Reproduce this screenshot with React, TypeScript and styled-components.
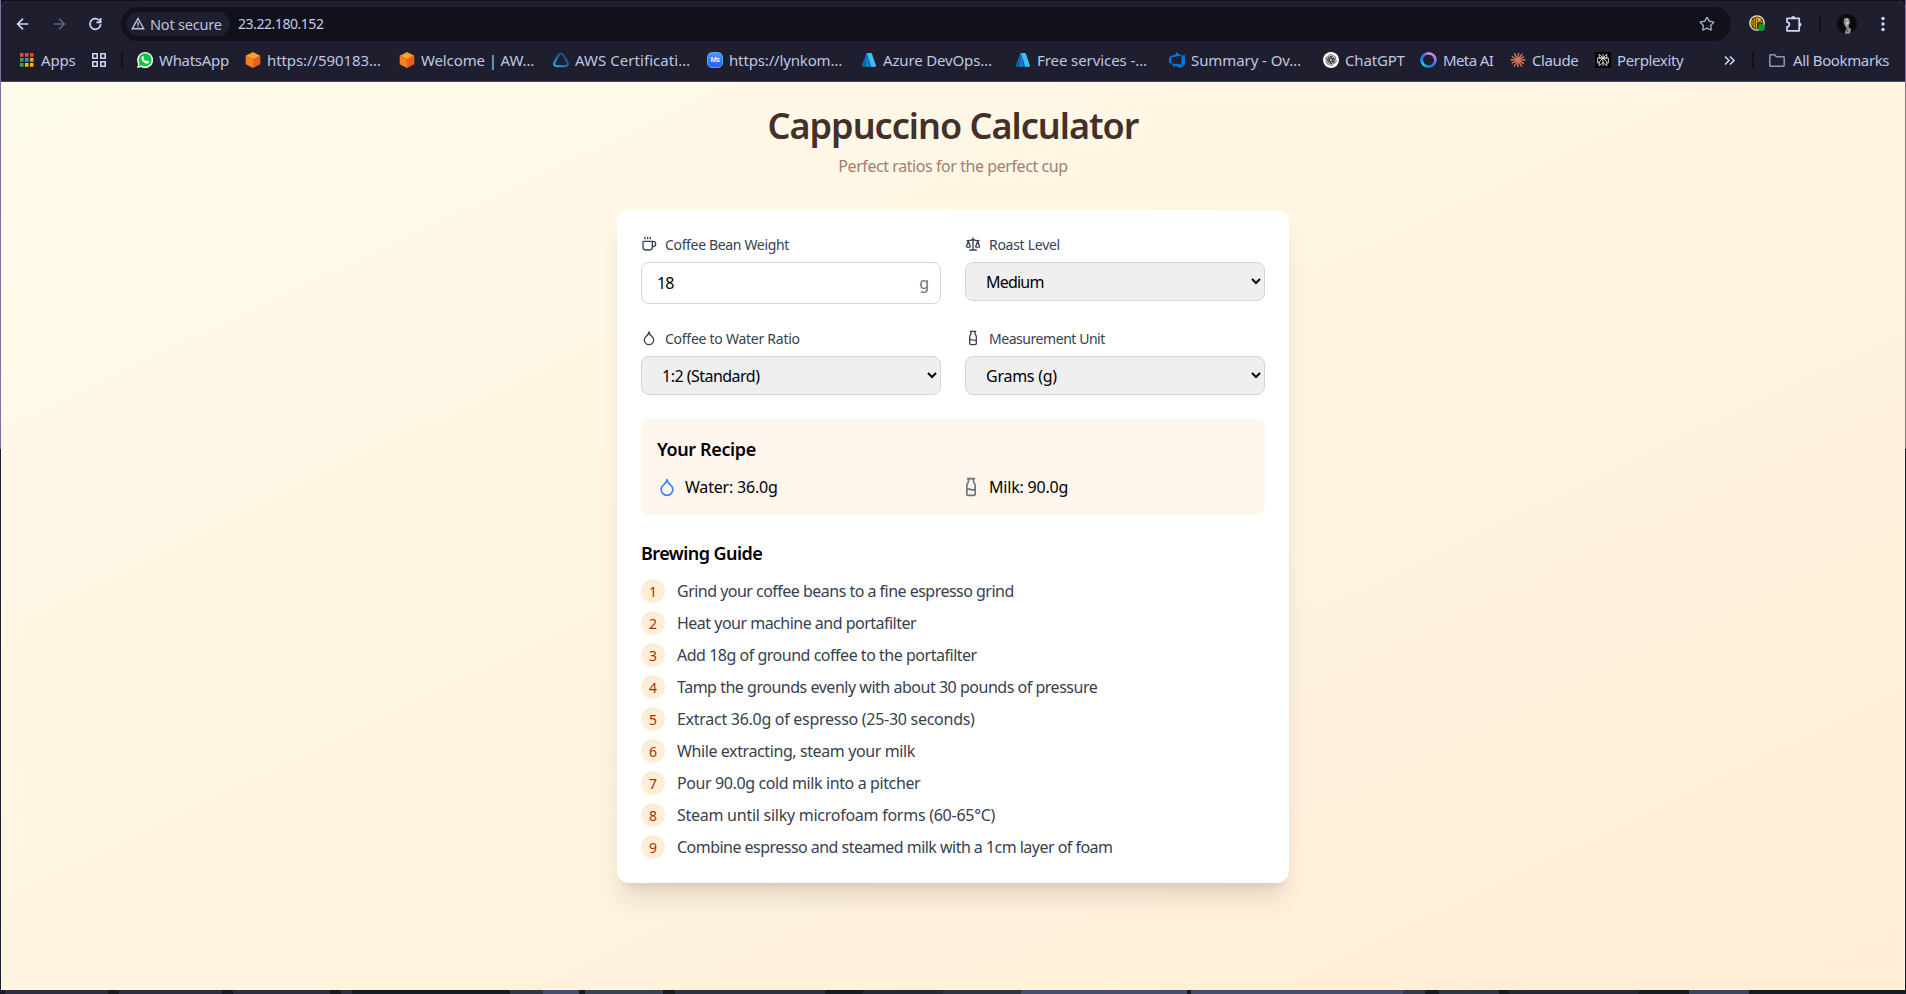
import React from "react";
import styled, { createGlobalStyle } from "styled-components";
import { Droplet, Milk, Star } from "lucide-react";

const GlobalStyle = createGlobalStyle`
  *, *::before, *::after { box-sizing: border-box; }
  html, body { margin: 0; height: 100%; background: #141b24; overflow: hidden; }
  body, input, select { font-family: "Noto Sans", "Open Sans", sans-serif; }
  h1, h2, p, ol { margin: 0; padding: 0; }
  svg { display: block; flex: none; }
`;

const Window = styled.div`
  width: 1906px;
  height: 994px;
  display: flex;
  flex-direction: column;
  border: solid transparent;
  border-width: 1px 1px 0;
  background:
    linear-gradient(#826f9f 0 449px, #1a2136 449px 990px, #141b24 990px) border-box;
`;

const Chrome = styled.header`
  height: 81px;
  flex: none;
  background: linear-gradient(#1e1e2e, #1e1e2e);
  border-bottom: 1px solid #45475a;
  border-radius: 7px 7px 0 0;
  box-shadow: 0 -8px 0 #11111b;
  color: #cdd6f4;
`;

const Toolbar = styled.div`
  display: flex;
  align-items: center;
  height: 45px;
  padding: 0 12px;
`;

const NavButton = styled.span<{ $dim?: boolean }>`
  width: 20px;
  margin-right: 16px;
  display: flex;
  justify-content: center;
  color: ${(p) => (p.$dim ? "#5d6075" : "#cdd6f4")};
`;

const AddressBar = styled.div`
  display: flex;
  align-items: center;
  width: 1610px;
  height: 34px;
  border-radius: 17px;
  background: #11111b;
  padding: 0 16px 0 5px;
`;

const Chip = styled.div`
  display: flex;
  align-items: center;
  gap: 5px;
  width: 104px;
  height: 24px;
  border-radius: 12px;
  padding-left: 5px;
  background: #1e1e2e;
  white-space: nowrap;
  font-size: 14.5px;
  letter-spacing: -0.2px;
  color: #bac2de;
`;

const Url = styled.span`
  margin-left: 8px;
  flex: 1;
  font-size: 14px;
  letter-spacing: -0.45px;
  color: #c3cbe8;
`;

const Tools = styled.div`
  flex: 1;
  display: flex;
  align-items: center;
  gap: 16px;
  padding-left: 18px;
  svg:first-child { margin-right: 3px; }
`;

const Separator = styled.span`
  width: 2px;
  height: 16px;
  background: #11111b;
  flex: none;
`;

const Bookmarks = styled.nav`
  display: flex;
  align-items: center;
  height: 28px;
  padding-left: 19px;
  font-size: 15px;
`;

const Bookmark = styled.span<{ $w: number; $ls?: number; $gap?: number }>`
  display: flex;
  align-items: center;
  gap: ${(p) => p.$gap ?? 6}px;
  width: ${(p) => p.$w}px;
  letter-spacing: ${(p) => p.$ls ?? 0}px;
  flex: none;
  white-space: nowrap;
  color: #bfc7e4;
`;

const Page = styled.main`
  height: 908px;
  flex: none;
  padding-top: 24px;
  display: flex;
  flex-direction: column;
  align-items: center;
  background: linear-gradient(to bottom right, #fffbeb, #ffedd5);
`;

const Title = styled.h1`
  font-size: 36px;
  line-height: 40px;
  font-weight: 600;
  letter-spacing: -1px;
  color: #43302b;
  margin-bottom: 8px;
`;

const Subtitle = styled.p`
  font-size: 16px;
  line-height: 24px;
  letter-spacing: -0.43px;
  color: #a18072;
  margin-bottom: 32px;
`;

const Card = styled.section`
  width: 672px;
  padding: 24px;
  border-radius: 12px;
  background: #fff;
  display: flex;
  flex-direction: column;
  gap: 24px;
  box-shadow: 0 20px 25px -5px rgba(0, 0, 0, 0.1), 0 8px 10px -6px rgba(0, 0, 0, 0.1);
`;

const Fields = styled.div`
  display: grid;
  grid-template-columns: 1fr 1fr;
  gap: 24px;
  align-items: start;
`;

const Field = styled.div`
  display: flex;
  flex-direction: column;
  gap: 8px;
`;

const Label = styled.label<{ $ls?: number }>`
  display: flex;
  align-items: center;
  gap: 8px;
  height: 20px;
  font-size: 14px;
  letter-spacing: ${(p) => p.$ls ?? 0}px;
  color: #374151;
`;

const WeightBox = styled.div`
  display: flex;
  align-items: center;
  height: 42px;
  border: 1px solid #d1d5db;
  border-radius: 8px;
  padding: 0 11px 0 15px;
  font-size: 16px;
  color: #6b7280;
`;

const WeightInput = styled.input`
  flex: 1;
  min-width: 0;
  border: 0;
  outline: 0;
  padding: 0;
  background: none;
  font-size: 16px;
  letter-spacing: -1px;
  color: #000;
`;

const Select = styled.select<{ $ls?: number }>`
  height: 39px;
  width: 100%;
  border: 1px solid #d1d5db;
  border-radius: 8px;
  padding: 0 0 0 16px;
  background: #efefef;
  font-size: 16px;
  letter-spacing: ${(p) => p.$ls ?? 0}px;
  color: #000;
`;

const Recipe = styled.div`
  padding: 16px;
  border-radius: 8px;
  background: #fff7ed;
`;

const Heading = styled.h2<{ $ls: number }>`
  font-size: 18px;
  line-height: 28px;
  font-weight: 600;
  letter-spacing: ${(p) => p.$ls}px;
  margin-bottom: 12px;
  color: #000;
`;

const Amounts = styled.div`
  display: grid;
  grid-template-columns: 1fr 1fr;
  gap: 16px;
`;

const Amount = styled.div<{ $tint: string }>`
  display: flex;
  align-items: center;
  gap: 8px;
  height: 24px;
  font-size: 16px;
  letter-spacing: -0.2px;
  color: #000;
  svg { color: ${(p) => p.$tint}; }
`;

const Steps = styled.ol`
  list-style: none;
  display: flex;
  flex-direction: column;
  gap: 8px;
`;

const Step = styled.li<{ $ls: number }>`
  display: flex;
  align-items: center;
  gap: 12px;
  height: 24px;
  font-size: 16px;
  letter-spacing: ${(p) => p.$ls}px;
  white-space: nowrap;
  color: #374151;
`;

const Badge = styled.span`
  width: 24px;
  height: 24px;
  border-radius: 50%;
  background: #ffedd5;
  color: #9a3412;
  font-size: 14px;
  letter-spacing: 0;
  display: flex;
  align-items: center;
  justify-content: center;
`;

const Desktop = styled.footer`
  height: 4px;
  display: flex;
  padding-left: 4px;
  background: #141b24;
`;

const Tile = styled.span<{ $w: number; $color: string; $gap: number }>`
  width: ${(p) => p.$w}px;
  margin-right: ${(p) => p.$gap}px;
  flex: none;
  background: ${(p) => p.$color};
`;

const Stroke = ({ size = 16, width = 2, children }: { size?: number; width?: number; children: React.ReactNode }) => (
  <svg width={size} height={size} viewBox="0 0 24 24" fill="none" stroke="currentColor" strokeWidth={width} strokeLinecap="round" strokeLinejoin="round">
    {children}
  </svg>
);

const CoffeeIcon = () => (
  <Stroke><path d="M10 2v2M14 2v2M6 2v2M16 8a1 1 0 0 1 1 1v8a4 4 0 0 1-4 4H7a4 4 0 0 1-4-4V9a1 1 0 0 1 1-1h14a4 4 0 1 1 0 8h-1" /></Stroke>
);

const ScaleIcon = () => (
  <Stroke><path d="m16 16 3-8 3 8c-.87.65-1.92 1-3 1s-2.13-.35-3-1ZM2 16l3-8 3 8c-.87.65-1.92 1-3 1s-2.13-.35-3-1ZM7 21h10M12 3v18M3 7h2c2 0 5-1 7-2 2 1 5 2 7 2h2" /></Stroke>
);

const AppsIcon = () => (
  <svg width="14" height="14" viewBox="0 0 14 14">
    {["#f04438", "#f04438", "#f04438", "#34a853", "#2f8df5", "#fbab00", "#34a853", "#fbbc04", "#fbbc04"].map((c, i) => (
      <rect key={i} x={(i % 3) * 5} y={Math.floor(i / 3) * 5} width="3.5" height="3.7" fill={c} />
    ))}
  </svg>
);

const GroupsIcon = () => (
  <svg width="14" height="14" fill="none" stroke="#cdd6f4" strokeWidth="1.6">
    <path d="M.8.8h4.4v4.4H.8zM8.8.8h4.4v4.4H8.800zM.8 8.800h4.400v4.400H.8zM8.800 8.800h4.400v4.400H8.800z" />
  </svg>
);

const WhatsAppIcon = () => (
  <svg width="16" height="16" viewBox="0 0 16 16">
    <path d="M0 16l1.2-4A8 8 0 1 1 4.2 15z" fill="#fff" />
    <circle cx="8.1" cy="7.9" r="6.6" fill="#12c346" />
    <path d="M1.7 14.3l1-3.3 2.2 2.4z" fill="#12c346" />
    <path d="M5.4 4.2c.7-.5 1.1 0 1.6 1.5.1.4-.6.8-.5 1.1.6 1.2 1.5 2 2.7 2.5.4.1.7-.8 1.1-.7 1.600.7 1.900.9 1.600 1.700-.5 1.300-2 1.500-3.600.9C6 10.300 4.600 8.200 4.500 6.300c0-.9.4-1.700.9-2.100z" fill="#fff" />
  </svg>
);

const CubeIcon = () => (
  <svg width="16" height="16" viewBox="0 0 16 16">
    <path d="M8 0l7.300 3.700L8 7.500.7 3.700z" fill="#ff9d2e" />
    <path d="M.7 3.700L8 7.500V16L.7 12.300z" fill="#f58020" />
    <path d="M15.300 3.700L8 7.500V16l7.300-3.700z" fill="#e9621b" />
  </svg>
);

const CertIcon = () => (
  <svg width="16" height="16" viewBox="0 0 16 16" fill="none">
    <defs>
      <linearGradient id="cert" x1="0" y1="1" x2="1" y2="0">
        <stop offset="0" stopColor="#14b5e2" /><stop offset=".45" stopColor="#126fa5" /><stop offset="1" stopColor="#1d3566" />
      </linearGradient>
    </defs>
    <path d="M8 1.500c1.200 0 2 .8 2.700 2l3.500 6.300c1.300 2.700.3 4.300-2.200 4.300H4c-2.500 0-3.500-1.600-2.200-4.300l3.500-6.300C6 2.300 6.800 1.500 8 1.500z" stroke="url(#cert)" strokeWidth="2.400" />
  </svg>
);

const BlueTag = styled.span`
  width: 16px;
  height: 16px;
  border-radius: 5px;
  background: linear-gradient(#3f9bf7, #2b5dfb);
  border: 1px solid #5ea7f8;
  color: #fff;
  font-size: 7px;
  line-height: 13px;
  font-weight: 600;
  text-align: center;
  letter-spacing: -0.5px;
`;

const AzureIcon = () => (
  <svg width="16" height="16" viewBox="0 0 16 16">
    <path d="M5.300 1h4.200L5 14.800H1.600c-.7 0-1-.5-.8-1.200z" fill="#1263b4" />
    <path d="M5 10.500h6.500l2 4.200H9.300z" fill="#0a6fc9" />
    <path d="M6 1h4c.5 0 .8.2 1 .7l4 12c.2.7-.1 1.100-.8 1.100h-3.900L6.400 3z" fill="#39bff0" />
    <path d="M6.300 4.500l2 6H6l3.200 4.300H5z" fill="#168bd8" />
  </svg>
);

const DevOpsIcon = () => (
  <svg width="16" height="16" viewBox="0 0 16 16">
    <path d="M16 3v9.800l-4 3.200-6.200-2.200V16l-3.500-4.600 10.200.8V3.500zM12.600 3.600L6.900 0v2.300L1.600 3.900 0 6v4.700l2.300 1V5.600z" fill="#0078d7" />
  </svg>
);

const ChatIcon = () => (
  <svg width="16" height="16" viewBox="0 0 16 16" fill="none">
    <circle cx="8" cy="8" r="8" fill="#fff" />
    <g stroke="#222" strokeWidth=".75">
      {[0, 60, 120, 180, 240, 300].map((a) => (
        <path key={a} transform={`rotate(${a} 8 8)`} d="M5.300 7.200V4.800a2.200 2.200 0 0 1 3.800-1.400M6.700 9V6.500l2.600-1.500 2.200 1.300" />
      ))}
    </g>
  </svg>
);

const MetaRing = styled.span`
  width: 17px;
  height: 16px;
  border-radius: 50%;
  background: conic-gradient(#e68cf0, #8f7cf5 80deg, #2476f5 130deg, #1b7cf5 180deg, #19d3d3 230deg, #1c6cf5 290deg, #7166f3 330deg, #e68cf0);
  mask: radial-gradient(circle, transparent 5px, #000 5.700px);
`;

const ClaudeIcon = () => (
  <svg width="16" height="16" viewBox="0 0 16 16" stroke="#d97757" strokeWidth="1.400" strokeLinecap="round">
    {[5, 35, 62, 90, 122, 150, 182, 212, 243, 272, 300, 332].map((a, i) => (
      <path key={a} transform={`rotate(${a} 8 8)`} d={i % 2 ? "M8 8V.9" : "M8 8V1.500"} />
    ))}
  </svg>
);

const PerplexityIcon = () => (
  <svg width="16" height="16" viewBox="0 0 16 16" fill="none" stroke="#e5e5e0" strokeWidth=".9">
    <rect width="16" height="16" fill="#000" stroke="none" />
    <path d="M8 2v12M4.200 2.200L8 6l3.800-3.800V6H4.200zM2.600 6h10.800v5h-1.600M2.600 6v5h1.600M8 6l-3.800 3.800v4L8 10.500l3.800 3.300v-4z" />
  </svg>
);

const ExtensionIcon = () => (
  <svg width="17" height="17" viewBox="0 0 17 17">
    <circle cx="8" cy="8" r="7.200" fill="#3b2c08" stroke="#f2eee0" strokeWidth="1.300" />
    <path d="M3 5v6M5.200 3v10M7.400 2v12" stroke="#d8a31a" strokeWidth="1.300" />
    <path d="M8.500 2.200a6 6 0 0 1 5 5.300h-5z" fill="#e3b21d" />
    <path d="M9 8l4-3M9 9h5" stroke="#3b2c08" />
    <circle cx="12.500" cy="12.500" r="3.400" fill="#0e9a2d" />
  </svg>
);

const PuzzleIcon = () => (
  <svg width="18" height="18" viewBox="0 0 18 18" fill="none" stroke="#cdd6f4" strokeWidth="1.700" strokeLinejoin="round">
    <path d="M2 3.300h12.200v12.500H2v-4c3.200-.2 3.200-4.500 0-4.700z" />
    <path d="M6.300 3.200a1.900 1.900 0 0 1 3.800 0zM14.300 7.700a1.900 1.900 0 0 1 0 3.800z" fill="#cdd6f4" strokeWidth=".6" />
  </svg>
);

const AvatarIcon = () => (
  <svg width="20" height="20" viewBox="0 0 20 20">
    <circle cx="10" cy="10" r="10" fill="#0b0b0c" />
    <path d="M7.500 4.500c2-1.800 5-.6 5.300 2 .3 2-.3 4-1.300 5l.4 2 2.300 1.500-1 4.300c-2 .7-4 .7-5.500 0l1.600-5.300-1.900-3c-1-2-1-5 .1-6.500z" fill="#8e8e90" />
    <path d="M8.500 6l2.500-1 1 3.500-1.500 3-1.600-1.200z" fill="#c9c9ca" />
    <path d="M8 7.300h1.500M10.500 7h1.300M9.500 14l1 4" stroke="#333" strokeWidth=".8" />
  </svg>
);

const bookmarks: { icon: React.ReactNode; text: string; w: number; ls: number }[] = [
  { icon: <WhatsAppIcon />, text: "WhatsApp", w: 108, ls: -0.3 },
  { icon: <CubeIcon />, text: "https://590183…", w: 154, ls: -0.08 },
  { icon: <CubeIcon />, text: "Welcome | AW…", w: 154, ls: -0.12 },
  { icon: <CertIcon />, text: "AWS Certificati…", w: 154, ls: 0.05 },
  { icon: <BlueTag>Ms</BlueTag>, text: "https://lynkom…", w: 154, ls: -0.15 },
  { icon: <AzureIcon />, text: "Azure DevOps…", w: 154, ls: -0.15 },
  { icon: <AzureIcon />, text: "Free services -…", w: 154, ls: -0.08 },
  { icon: <DevOpsIcon />, text: "Summary - Ov…", w: 154, ls: -0.08 },
  { icon: <ChatIcon />, text: "ChatGPT", w: 97, ls: -0.17 },
  { icon: <MetaRing />, text: "Meta AI", w: 90, ls: -0.6 },
  { icon: <ClaudeIcon />, text: "Claude", w: 85, ls: -0.4 },
  { icon: <PerplexityIcon />, text: "Perplexity", w: 129, ls: -0.36 },
];

const steps: [string, number][] = [
  ["Grind your coffee beans to a fine espresso grind", -0.52],
  ["Heat your machine and portafilter", -0.51],
  ["Add 18g of ground coffee to the portafilter", -0.48],
  ["Tamp the grounds evenly with about 30 pounds of pressure", -0.48],
  ["Extract 36.0g of espresso (25-30 seconds)", -0.28],
  ["While extracting, steam your milk", -0.4],
  ["Pour 90.0g cold milk into a pitcher", -0.39],
  ["Steam until silky microfoam forms (60-65°C)", -0.26],
  ["Combine espresso and steamed milk with a 1cm layer of foam", -0.53],
];

/* Window strip peeking out below the browser: width, colour, gap to the next tile. */
const tiles: [number, string, number][] = [
  [103, "#2b2d44", 11],
  [103, "#2b2d44", 11],
  [97, "#2b2d44", 11],
  [11, "#2b2d44", 158],
  [33, "#2e364c", 0],
  [36, "#454f6d", 6],
  [78, "#38415b", 12],
  [150, "#2a3147", 38],
  [80, "#222a3a", 0],
  [78, "#2c344a", 0],
  [166, "#454f6d", 4],
  [212, "#454f6d", 0],
  [22, "#323a52", 14],
  [60, "#2e364c", 10],
  [130, "#222a3a", 50],
  [60, "#3c4560", 126],
];

export default function App() {
  return (
    <>
      <GlobalStyle />
      <Window>
        <Chrome>
          <Toolbar>
            <NavButton><Stroke><path d="M20 12H4M12 4l-8 8 8 8" strokeWidth="2.500" strokeLinecap="butt" strokeLinejoin="miter" /></Stroke></NavButton>
            <NavButton $dim><Stroke><path d="M4 12h16M12 4l8 8-8 8" strokeWidth="2.500" strokeLinecap="butt" strokeLinejoin="miter" /></Stroke></NavButton>
            <NavButton><Stroke><path d="M20.500 12a8 8 0 1 1-2.600-6L20 8.500M20.500 3v6.500H14" strokeWidth="2.500" strokeLinecap="butt" strokeLinejoin="miter" /></Stroke></NavButton>
            <AddressBar>
              <Chip>
                <svg width="14" height="13" viewBox="0 0 14 13" fill="none" stroke="#bac2de" strokeWidth="1.400"><path d="M7 1.500l5.800 10.300H1.200zM7 5v3.500M7 9.300v1.200" /></svg>
                Not secure
              </Chip>
              <Url>23.22.180.152</Url>
              <Star size={16} color="#a6adc8" />
            </AddressBar>
            <Tools>
              <ExtensionIcon />
              <PuzzleIcon />
              <Separator />
              <AvatarIcon />
              <svg width="20" height="16" fill="#cdd6f4"><circle cx="10" cy="2.500" r="1.700" /><circle cx="10" cy="8" r="1.700" /><circle cx="10" cy="13.500" r="1.700" /></svg>
            </Tools>
          </Toolbar>
          <Bookmarks>
            <Bookmark $w={72} $gap={7} $ls={-0.2}><AppsIcon />Apps</Bookmark>
            <Bookmark $w={29}><GroupsIcon /></Bookmark>
            <Bookmark $w={16}><Separator /></Bookmark>
            {bookmarks.map((b) => (
              <Bookmark key={b.text} $w={b.w} $ls={b.ls}>{b.icon}{b.text}</Bookmark>
            ))}
            <Bookmark $w={28}><svg width="12" height="11" fill="none" stroke="#cdd6f4" strokeWidth="1.600"><path d="M1 1.500l4 4-4 4M6 1.500l4 4-4 4" /></svg></Bookmark>
            <Bookmark $w={17}><Separator /></Bookmark>
            <Bookmark $w={122} $gap={8} $ls={-0.37}><svg width="16" height="13" fill="none" stroke="#9399b2" strokeWidth="1.500"><path d="M.8 1.500q0-.7.700-.7h4.200l1.700 1.900h7q.8 0 .8.700v7.900q0 .9-.8.900H1.600q-.8 0-.8-.8z" /></svg>All Bookmarks</Bookmark>
          </Bookmarks>
        </Chrome>
        <Page>
          <Title>Cappuccino Calculator</Title>
          <Subtitle>Perfect ratios for the perfect cup</Subtitle>
          <Card>
            <Fields>
              <Field>
                <Label $ls={-0.34}><CoffeeIcon />Coffee Bean Weight</Label>
                <WeightBox><WeightInput defaultValue="18" />g</WeightBox>
              </Field>
              <Field>
                <Label $ls={-0.28}><ScaleIcon />Roast Level</Label>
                <Select $ls={-0.8}><option>Medium</option></Select>
              </Field>
              <Field>
                <Label $ls={-0.26}><Droplet size={16} />Coffee to Water Ratio</Label>
                <Select $ls={-0.52}><option>1:2 (Standard)</option></Select>
              </Field>
              <Field>
                <Label $ls={-0.45}><Milk size={16} />Measurement Unit</Label>
                <Select $ls={-0.25}><option>Grams (g)</option></Select>
              </Field>
            </Fields>
            <Recipe>
              <Heading $ls={-0.39}>Your Recipe</Heading>
              <Amounts>
                <Amount $tint="#3b82f6"><Droplet size={20} />Water: 36.0g</Amount>
                <Amount $tint="#6b7280"><Milk size={20} />Milk: 90.0g</Amount>
              </Amounts>
            </Recipe>
            <div>
              <Heading $ls={-0.55}>Brewing Guide</Heading>
              <Steps>
                {steps.map(([text, ls], i) => (
                  <Step key={text} $ls={ls}><Badge>{i + 1}</Badge>{text}</Step>
                ))}
              </Steps>
            </div>
          </Card>
        </Page>
        <Desktop>
          {tiles.map(([w, color, gap], i) => (
            <Tile key={i} $w={w} $color={color} $gap={gap} />
          ))}
        </Desktop>
      </Window>
    </>
  );
}
